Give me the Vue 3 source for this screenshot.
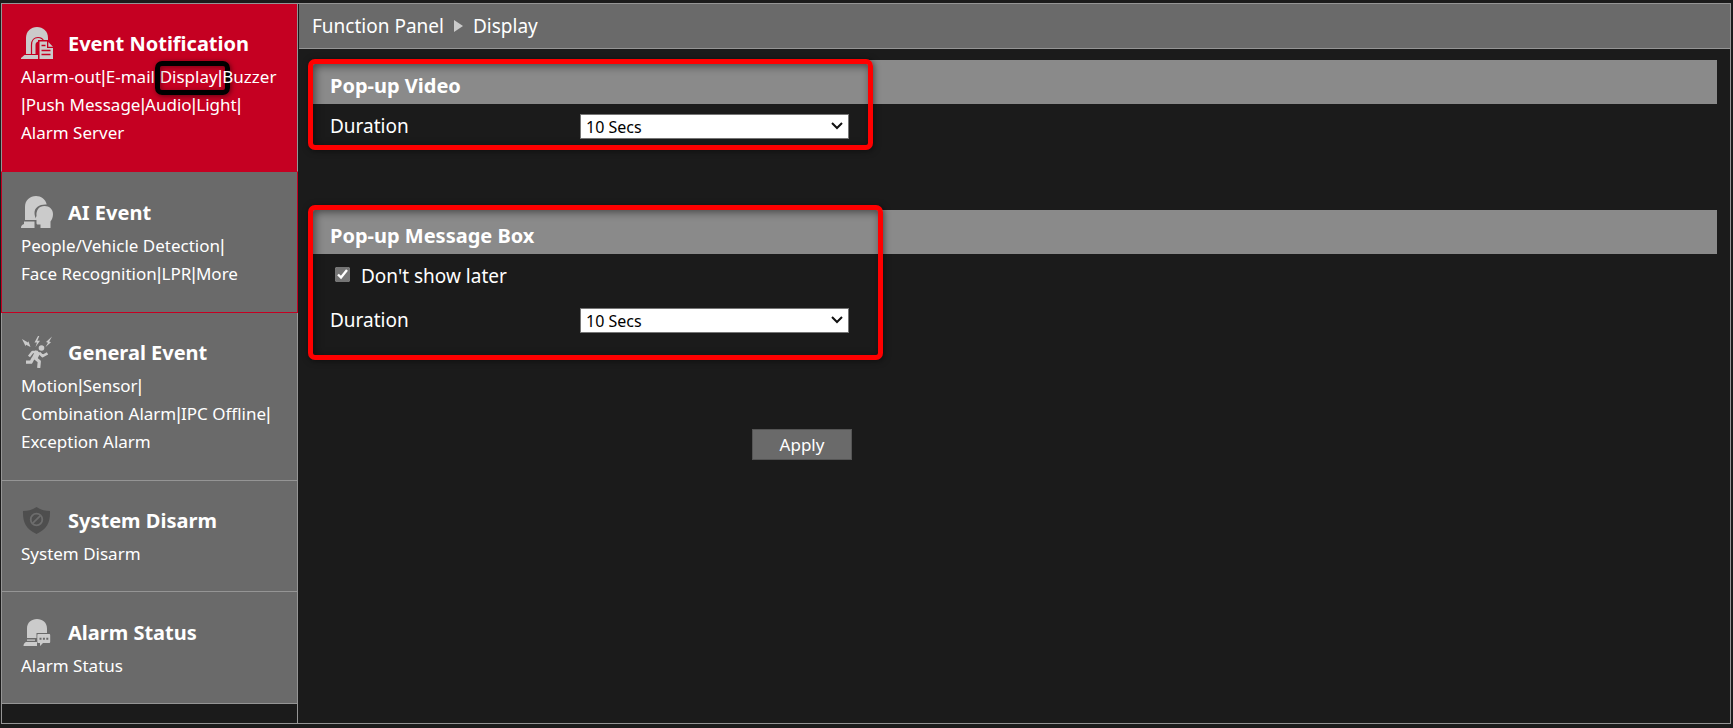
<script setup>
import { ref } from 'vue'

const groups = [
  {
    id: 'notification',
    title: 'Event Notification',
    lines: [
      ['Alarm-out', '|', 'E-mail', '|', 'Display', '|', 'Buzzer'],
      ['|', 'Push Message', '|', 'Audio', '|', 'Light', '|'],
      ['Alarm Server'],
    ],
  },
  {
    id: 'ai',
    title: 'AI Event',
    lines: [
      ['People/Vehicle Detection', '|'],
      ['Face Recognition', '|', 'LPR', '|', 'More'],
    ],
  },
  {
    id: 'general',
    title: 'General Event',
    lines: [['Motion', '|', 'Sensor', '|'], ['Combination Alarm', '|', 'IPC Offline', '|'], ['Exception Alarm']],
  },
  { id: 'disarm', title: 'System Disarm', lines: [['System Disarm']] },
  { id: 'status', title: 'Alarm Status', lines: [['Alarm Status']] },
]

const durations = ['5 Secs', '10 Secs', '20 Secs', '30 Secs']
const videoDuration = ref('10 Secs')
const messageDuration = ref('10 Secs')
const dontShow = ref(true)
</script>

<template>
  <div class="page">
    <div class="frame">
      <nav class="sidebar">
        <section v-for="g in groups" :key="g.id" class="group" :class="g.id">
          <h2 class="group-head">
            <svg v-if="g.id === 'notification'" class="icon" viewBox="0 0 32 32" aria-hidden="true">
              <path fill="#cbcbcb" d="M5 27V11C5 4 10 0 16 0s11 4 11 11v16z" />
              <path fill="none" stroke="#c50022" stroke-width="1.2" d="M10.500 27V18c0-5 3-7.500 6.500-7.500 3 0 5 1.500 6 4" />
              <path fill="#c50022" d="M14.500 27v-9c0-2 1.200-3.500 3.500-3.500v12.500z" />
              <path fill="#cbcbcb" d="M3.500 28H17v4H0v-1z" />
              <path fill="#c50022" d="M17 13h11l5 6v13H17z" />
              <path fill="#cbcbcb" d="M18.500 14.500H26V21h6v11H18.500z" />
              <path fill="#cbcbcb" d="M27.300 15l4.700 4.700h-4.700z" />
              <path stroke="#c50022" stroke-width="1.400" d="M20.500 18.500h4M20.500 23.500h9M20.500 27.500h9" />
            </svg>
            <svg v-else-if="g.id === 'ai'" class="icon" viewBox="0 0 32 32" aria-hidden="true">
              <path fill="#cbcbcb" d="M4 24V11C4 4 9 0 15 0c5 0 9.500 3 10.700 8.500C19 8 13.500 11 13.500 17c0 2.500 1 5 2 7z" />
              <path fill="#cbcbcb" d="M3 25.500h10.500V32H0c0-2 .5-3 3-4z" />
              <path fill="#cbcbcb" d="M23.500 10c5 0 8.500 3.500 8.500 8 0 3.500-1 5.500-2.500 7.500V32H19.500v-3.500h-2.700c-1 0-1.300-.6-1.300-1.500v-3l-1.500-.8 1.500-3.200C15 14 18 10 23.500 10z" />
            </svg>
            <svg v-else-if="g.id === 'general'" class="icon" viewBox="0 0 32 32" aria-hidden="true">
              <g fill="#cbcbcb">
                <path d="M1 3l6 3.500.3-1.500L9.500 11 5 8.800l-.4 1.400z" />
                <path d="M17 0l-3.500 6.500H16L14.500 11l4.500-6.200h-2.700L18.300 0z" />
                <path d="M31 .5L25 6l2 .7-2.500 4.300L30 6.300l-1.800-.8z" />
                <circle cx="20.500" cy="12" r="2.800" />
              </g>
              <g fill="none" stroke="#cbcbcb" stroke-linejoin="round">
                <path stroke-width="2.600" d="M8 20.500l3.500-4.500H17M18.500 17l3 3.200 5-2.800" />
                <path stroke-width="5.500" d="M17 15.500l-3.500 7" />
                <path stroke-width="3.200" d="M14 22l4.300 3.500-.6 6.500M12.500 21.500l-2.500 4.700H5" />
              </g>
            </svg>
            <svg v-else-if="g.id === 'disarm'" class="icon" viewBox="0 0 32 32" aria-hidden="true">
              <path fill="#4e4e4e" d="M15.500 3C19 5.500 23.500 6.800 29 7c.3 11-2.500 18-13.500 23C4.500 25 1.700 18 2 7c5.500-.2 10-1.500 13.500-4z" />
              <g fill="none" stroke="#6d6d6d" stroke-width="1.800">
                <circle cx="15.500" cy="15.500" r="5.800" />
                <path d="M11.800 19.200l7.400-7.400" />
              </g>
            </svg>
            <svg v-else class="icon" viewBox="0 0 32 32" aria-hidden="true">
              <path fill="#cbcbcb" d="M6 22V12.500C6 6.500 10.500 3 16 3s10 3.500 10 9.500V17H15.500v5z" />
              <path fill="#cbcbcb" d="M6 23.500h8v1.200H6zM5 26h11v4H2.500c0-2 .7-3 2.500-4z" />
              <path fill="#cbcbcb" d="M17.500 18h10.500c.8 0 1.200.4 1.200 1.200v6.600c0 .8-.4 1.200-1.200 1.200h-6l-3 3v-3h-1.500c-.8 0-1.200-.4-1.200-1.200v-6.600c0-.8.4-1.200 1.200-1.200z" />
              <path fill="#6a6a6a" d="M18.500 21.700h2v2h-2zM21.900 21.700h2v2h-2zM25.300 21.700h2v2h-2z" />
            </svg>
            <span>{{ g.title }}</span>
          </h2>
          <p v-for="(line, i) in g.lines" :key="i" class="line">
            <template v-for="(part, j) in line" :key="j"
              ><span v-if="part === '|'" class="sep">|</span
              ><a v-else href="#" class="link" :class="{ marked: part === 'Display' }">{{ part }}</a
            ></template>
          </p>
        </section>
      </nav>

      <main class="main">
        <header class="crumbs">
          <a href="#" class="link">Function Panel</a>
          <svg class="crumb-arrow" viewBox="0 0 9 12" aria-hidden="true"><path fill="#cbcbcb" d="M0 0l9 6-9 6z" /></svg>
          <span>Display</span>
        </header>

        <form class="content" @submit.prevent>
          <section class="panel video">
            <h3 class="bar">Pop-up Video</h3>
            <div class="row">
              <label class="name" for="video-duration">Duration</label>
              <select id="video-duration" v-model="videoDuration" class="select">
                <option v-for="d in durations" :key="d">{{ d }}</option>
              </select>
            </div>
          </section>

          <section class="panel message">
            <h3 class="bar">Pop-up Message Box</h3>
            <div class="row check">
              <input id="dont-show" v-model="dontShow" type="checkbox" class="box" />
              <label for="dont-show">Don't show later</label>
            </div>
            <div class="row">
              <label class="name" for="message-duration">Duration</label>
              <select id="message-duration" v-model="messageDuration" class="select">
                <option v-for="d in durations" :key="d">{{ d }}</option>
              </select>
            </div>
          </section>

          <button type="submit" class="apply">Apply</button>
        </form>
      </main>
    </div>
  </div>
</template>

<style>
body {
  margin: 0;
  background: #1b1b1b;
}
</style>

<style scoped>
.page {
  box-sizing: border-box;
  display: flex;
  min-height: 100vh;
  padding: 3px 2px 4px 1px;
  background: #1b1b1b;
  color: #fff;
  font-family: 'Noto Sans', 'Open Sans', sans-serif;
}
.frame {
  flex: 1;
  display: flex;
  border: 1px solid #959595;
}
.sidebar {
  flex: none;
  width: 295px;
  border-right: 1px solid #959595;
}
.group {
  position: relative;
  margin: 0 -1px;
  padding: 23px 19px 24px;
  border: solid #959595;
  border-width: 0 1px 1px;
  background: #6a6a6a;
}
.notification {
  background: #c50022;
  border-bottom-color: #c50022;
}
.ai {
  padding-top: 24px;
  border-color: #c50022;
}
.disarm {
  padding-bottom: 23px;
}
.status {
  padding-top: 24px;
  padding-bottom: 23px;
}
.group-head {
  display: flex;
  align-items: center;
  gap: 15px;
  height: 32px;
  margin: 0 0 4px;
  font-size: 20px;
  font-weight: 700;
  line-height: 32px;
  white-space: nowrap;
}
.group-head span {
  padding-top: 2px;
}
.icon {
  flex: none;
  width: 32px;
  height: 32px;
}
.line {
  margin: 0;
  font-size: 17px;
  line-height: 28px;
  white-space: nowrap;
}
.link {
  position: relative;
  color: inherit;
  text-decoration: none;
}
.sep {
  font-family: 'Liberation Sans', sans-serif;
  font-size: 18px;
  line-height: 1;
}
.marked::after {
  content: '';
  position: absolute;
  inset: -4px -12px -7px -5px;
  border: 5px solid #000;
  border-radius: 7px;
  box-shadow: 1px 1px 5px rgba(0, 0, 0, 0.5), inset 1px 1px 5px rgba(0, 0, 0, 0.4);
  pointer-events: none;
}
.main {
  flex: 1;
  min-width: 0;
  padding-left: 1px;
}
.crumbs {
  display: flex;
  align-items: center;
  gap: 10px;
  height: 44px;
  padding-left: 13px;
  border-bottom: 1px solid #959595;
  background: #6a6a6a;
  font-size: 19px;
  line-height: 44px;
}
.crumb-arrow {
  width: 9px;
  height: 12px;
}
.content {
  padding: 11px 13px;
  font-size: 19px;
}
.panel {
  position: relative;
}
.panel::after {
  content: '';
  position: absolute;
  box-sizing: border-box;
  left: -4px;
  border: 5px solid #f00;
  border-radius: 7px;
  box-shadow: 1px 1px 6px rgba(0, 0, 0, 0.5), inset 2px 2px 9px rgba(0, 0, 0, 0.5);
  pointer-events: none;
}
.video {
  margin-bottom: 62px;
}
.video::after {
  top: -1px;
  width: 565px;
  height: 91px;
}
.message {
  margin-bottom: 87px;
}
.message::after {
  top: -5px;
  width: 575px;
  height: 155px;
}
.bar {
  height: 44px;
  margin: 0;
  padding-left: 18px;
  background: #8a8a8a;
  font-size: 20px;
  font-weight: 700;
  line-height: 52px;
}
.row {
  display: flex;
  align-items: center;
  height: 44px;
  padding-left: 18px;
}
.name {
  width: 250px;
}
.check {
  padding-left: 23px;
}
.box {
  width: 15px;
  height: 15px;
  margin: 0 11px 4px 0;
  accent-color: #757575;
}
.select {
  box-sizing: border-box;
  width: 269px;
  height: 25px;
  padding: 1px 24px 0 5px;
  border: 1px solid #767676;
  border-radius: 0;
  appearance: none;
  background: #fff
    url("data:image/svg+xml,%3Csvg xmlns='http://www.w3.org/2000/svg' width='12' height='8'%3E%3Cpath d='M1 1l5 5 5-5' fill='none' stroke='%23111' stroke-width='2'/%3E%3C/svg%3E")
    no-repeat right 5px center;
  color: #000;
  font-family: inherit;
  font-size: 16px;
}
.apply {
  display: block;
  width: 100px;
  height: 31px;
  margin-left: 440px;
  padding: 0;
  border: 1px solid #555;
  background: #6a6a6a;
  color: #fff;
  font-family: inherit;
  font-size: 17px;
  line-height: 28px;
}
</style>
